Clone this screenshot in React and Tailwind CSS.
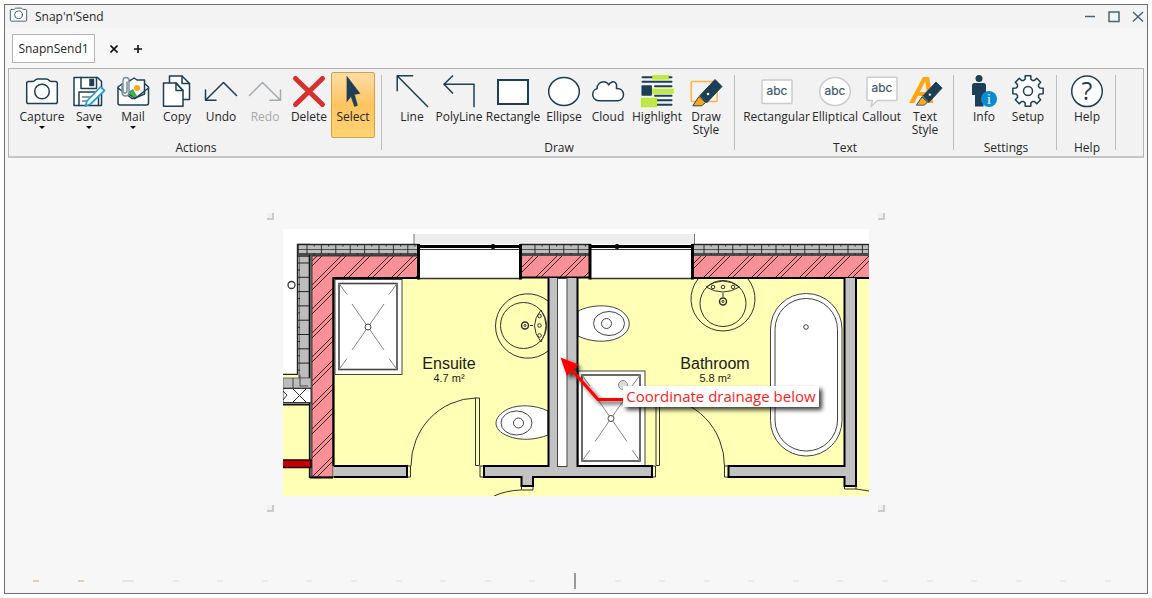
import React, { useState } from "react";

const NAVY = "#1c3f55";

const gearPath = () => {
  const pts = [];
  for (let i = 0; i < 8; i++) {
    const base = (i * Math.PI) / 4;
    [[-0.24, 12.2], [-0.18, 15.4], [0.18, 15.4], [0.24, 12.2], [0.39, 11.4]].forEach(([a, r]) => {
      pts.push(`${(16 + r * Math.sin(base + a)).toFixed(2)} ${(16 - r * Math.cos(base + a)).toFixed(2)}`);
    });
  }
  return `M${pts.join("L")}Z`;
};

const Icon = ({ children, className = "h-8 w-8" }) => (
  <svg
    viewBox="0 0 32 32"
    className={`${className} shrink-0 overflow-visible`}
    fill="none"
    stroke={NAVY}
    strokeWidth="1.5"
    strokeLinejoin="round"
    strokeLinecap="round"
    aria-hidden="true"
  >
    {children}
  </svg>
);

const CameraShape = () => (
  <>
    <path d="M2.500 6.500H6.500Q8 6.500 9 5.300Q10 4 11.500 4H20.500Q22 4 23 5.300Q24 6.500 25.500 6.500H29.500Q31.300 6.500 31.300 8.300V26.700Q31.300 28.500 29.500 28.500H2.500Q.7 28.500 .7 26.700V8.300Q.7 6.500 2.500 6.500Z" fill="#fff" />
    <circle cx="16" cy="16.500" r="7.300" />
  </>
);

const Pen = () => (
  <>
    <path d="M3 30.500L9 21.500L15.500 27.500L12 30.500Z" fill="#ffa614" stroke={NAVY} strokeWidth="1" />
    <path d="M10 20.500L25 4.500L32 11.500L17 27.500Z" fill={NAVY} strokeWidth="1" />
    <circle cx="18" cy="19" r="1.300" fill="#fff" stroke="none" />
  </>
);

const AbcText = ({ y = 20 }) => (
  <text x="16" y={y} textAnchor="middle" fontSize="12" fill="#3d5a6e" stroke="#3d5a6e" strokeWidth="0.2" className="font-[Inter,sans-serif]">
    abc
  </text>
);

const icons = {
  capture: <CameraShape />,
  save: (
    <>
      <path d="M1 2.500H24.500L28.500 6.500V30.500H1Z" fill="#fff" />
      <path d="M8 2.500V13.500H23.500V2.500M6 30.500V17H25.500V30.500" />
      <path d="M17 4.500H20.500V10.500H17Z" fill={NAVY} />
      <path d="M9.500 22H19M9.500 26H15" strokeWidth="1.200" />
      <path d="M27.500 12L31.500 15.500L17.500 29L12.500 31L14 26Z" fill="#fff" stroke="#2a9ddb" strokeWidth="1.800" />
    </>
  ),
  mail: (
    <>
      <path d="M1 12L5 9H28L31.500 12V28Q31.500 30 29.500 30H3Q1 30 1 28Z" fill="#fff" />
      <path d="M14 5L17 3L20 5H27.500V19L18 23L10 18V7Z" fill="#fff" />
      <path d="M11 17L16 14L20 21L17 23Z" fill="#43ad4b" stroke="none" />
      <circle cx="20" cy="13" r="3" fill="#ffa614" stroke="none" />
      <path d="M1 13L15 23.500H18L31.500 13" />
      <path d="M5 10V17Q5 21 8.500 21Q12 21 12 17V6Q12 2.500 9 2.500Q6 2.500 6 6V16Q6 18 8 18Q10 18 10 16V7" fill="#f4f4f4" stroke="#7c8f9c" />
    </>
  ),
  copy: (
    <>
      <path d="M8.500 1H21L28.500 8.500V24.500H8.500Z" fill="#fff" />
      <path d="M21 1V8.500H28.500" />
      <path d="M2.500 8H15L22 15.500V31.300H2.500Z" fill="#fff" />
      <path d="M15 8V15.500H22Z" />
    </>
  ),
  undo: <path d="M.5 15V25.300H11M.5 25.300L18.500 7.500L31.500 20.500" />,
  redo: <path d="M31.500 15V25.300H21M31.500 25.300L13.500 7.500L.5 20.500" stroke="#a3abb1" />,
  delete: <path d="M2.500 3.500L29.500 29.500M29.500 3.500L2.500 29.500" stroke="#d7302f" strokeWidth="5" />,
  select: <path d="M10 1.500L23 18.500L17.500 19.500L20.500 30.500L17.500 31.500L14 21.500L10 26.500Z" fill={NAVY} strokeWidth="0.5" />,
  line: <path d="M1.200 15.500V.8H16.500M1.200 .8L31.500 31.500" strokeLinecap="square" />,
  polyline: <path d="M9.500 1L1 9.200L9.500 18M1 9.200H31V31.500" strokeLinecap="square" />,
  rectangle: <rect x="1" y="5" width="30" height="24" fill="#fff" strokeWidth="2" strokeLinejoin="miter" />,
  ellipse: <ellipse cx="16" cy="16.500" rx="15.300" ry="14" fill="#fff" />,
  cloud: <path d="M7 25.800C3 25.800 .7 22.500 .7 19.500C.7 16 3 14 5 13.700C5 9 8.500 6.700 11.500 6.700C14.500 6.700 16 8.500 16.700 10C18 7 22 5.500 24 8.500C25.500 10.500 24 12 24.500 13.500C28.500 13 31.500 16 31.500 19.500C31.500 23 29 25.800 25.500 25.800Z" fill="#fff" />,
  highlight: (
    <>
      <path d="M1.500 2.200H30.500M1.500 6.800H30.500M14 11.300H30.500M14 16H30.500M14 20.700H30.500M1.500 25.300H30.500M1.500 29.800H30.500" strokeWidth="2" />
      <rect x="1.200" y="11" width="9" height="9" fill={NAVY} />
      <g fill="#c5d79a" stroke="#baf20a" strokeWidth="1.500" strokeLinejoin="miter">
        <rect x="12" y=".8" width="15" height="3" />
        <rect x="12" y="14.500" width="20" height="3.500" />
        <rect x=".8" y="23.500" width="14.500" height="3.500" />
        <rect x=".8" y="28" width="14.500" height="3.500" />
      </g>
    </>
  ),
  drawStyle: (
    <>
      <rect x="1.200" y="6.500" width="26" height="20" rx="1" stroke="#ffb53c" />
      <Pen />
    </>
  ),
  rectangular: (
    <>
      <rect x="1" y="5" width="30" height="23.500" rx="1" fill="#fff" stroke="#ccc" />
      <AbcText />
    </>
  ),
  elliptical: (
    <>
      <ellipse cx="16" cy="16.500" rx="15.300" ry="14" fill="#fff" stroke="#ccc" />
      <AbcText />
    </>
  ),
  callout: (
    <>
      <path d="M2 2.200H30Q31 2.200 31 3.200V24.500Q31 25.500 30 25.500H11.500L5 31.500L6.500 25.500H2Q1 25.500 1 24.500V3.200Q1 2.200 2 2.200Z" fill="#fff" stroke="#ccc" />
      <AbcText y={17} />
    </>
  ),
  textStyle: (
    <>
      <text x="1" y="28" fontSize="36" fontWeight="700" fontStyle="italic" fill="#ffa614" stroke="none" className="font-['Liberation_Sans',sans-serif]">
        A
      </text>
      <g transform="translate(5 3) scale(.88)">
        <Pen />
      </g>
    </>
  ),
  info: (
    <>
      <circle cx="11" cy="3.500" r="3.500" fill={NAVY} stroke="none" />
      <path d="M6.500 8H15.500Q18 8 18 10.500V19H15.500V31.500H7V20H4V10.500Q4 8 6.500 8Z" fill={NAVY} stroke="none" />
      <circle cx="21" cy="24" r="8" fill="#0a8bd6" stroke="none" />
      <text x="21" y="29" textAnchor="middle" fontSize="14" fill="#fff" stroke="none" className="font-['Liberation_Serif',serif]">
        i
      </text>
    </>
  ),
  setup: (
    <>
      <path d={gearPath()} fill="#fff" />
      <circle cx="16" cy="16" r="4.500" />
    </>
  ),
  help: (
    <>
      <circle cx="16" cy="16.300" r="15.300" fill="#fff" />
      <text x="16" y="25" textAnchor="middle" fontSize="25" fill={NAVY} stroke="none" className="font-['Open_Sans',sans-serif]">
        ?
      </text>
    </>
  ),
};

const groups = [
  {
    name: "Actions",
    tools: [
      { id: "capture", label: "Capture", width: "w-[50px]", menu: true },
      { id: "save", label: "Save", menu: true },
      { id: "mail", label: "Mail", menu: true },
      { id: "copy", label: "Copy" },
      { id: "undo", label: "Undo" },
      { id: "redo", label: "Redo", disabled: true },
      { id: "delete", label: "Delete" },
      { id: "select", label: "Select" },
    ],
  },
  {
    name: "Draw",
    tools: [
      { id: "line", label: "Line" },
      { id: "polyline", label: "PolyLine", width: "w-[50px]" },
      { id: "rectangle", label: "Rectangle", width: "w-[58px]" },
      { id: "ellipse", label: "Ellipse" },
      { id: "cloud", label: "Cloud" },
      { id: "highlight", label: "Highlight", width: "w-[54px]" },
      { id: "drawStyle", label: "Draw Style" },
    ],
  },
  {
    name: "Text",
    tools: [
      { id: "rectangular", label: "Rectangular", width: "w-[67px]" },
      { id: "elliptical", label: "Elliptical", width: "w-[50px]" },
      { id: "callout", label: "Callout", width: "w-[43px]" },
      { id: "textStyle", label: "Text Style" },
    ],
  },
  {
    name: "Settings",
    tools: [
      { id: "info", label: "Info" },
      { id: "setup", label: "Setup" },
    ],
  },
  { name: "Help", tools: [{ id: "help", label: "Help" }] },
];

const ToolButton = ({ tool, active, onClick }) => (
  <button
    type="button"
    disabled={tool.disabled}
    aria-pressed={active}
    onClick={onClick}
    className={`flex h-[66px] flex-col items-center gap-[3px] rounded-xs border pt-0.5 ${tool.width || "w-11"} ${
      active ? "border-[#d3a23c] bg-linear-to-b from-[#fddca4] via-[#ffc45f] to-[#ffd372]" : "border-transparent"
    } ${tool.disabled ? "text-[#a8a8a8]" : "text-[#262626]"}`}
  >
    <Icon>{icons[tool.id]}</Icon>
    <span className="w-min text-center text-xs leading-[13px]">{tool.label}</span>
    {tool.menu && <span className="h-0 w-0 border-x-3 border-t-3 border-x-transparent border-t-black" />}
  </button>
);

const Ribbon = () => {
  const [active, setActive] = useState("select");
  return (
    <div className="mx-[3px] flex border border-b-2 border-[#b4b4b4] border-b-[#c6c6c6] bg-[#f2f2f2]">
      {groups.map((g) => (
        <React.Fragment key={g.name}>
          <section aria-label={g.name} className="flex flex-col items-center pt-[3px] pr-1.5 pl-2">
            <div className="flex">
              {g.tools.map((t) => (
                <ToolButton key={t.id} tool={t} active={active === t.id} onClick={() => setActive(t.id)} />
              ))}
            </div>
            <span className="pt-0.5 text-xs text-[#262626]">{g.name}</span>
          </section>
          <div className="my-1.5 w-px bg-[#bdbdbd]" />
        </React.Fragment>
      ))}
    </div>
  );
};

const Brick = ({ x1, x2, offset = 0 }) => {
  const joints = [];
  for (let x = x1 + offset; x < x2; x += 14.4) joints.push(x);
  return (
    <g stroke="#222" strokeWidth="0.9">
      <rect x={x1} y="244.500" width={x2 - x1} height="11.500" fill="#bdbdbd" strokeWidth="1.400" />
      <rect x={x1} y="253" width={x2 - x1} height="3" fill="#4a4a4a" stroke="none" />
      <path d={`M${x1} 249.500H${x2}`} strokeWidth="0.7" />
      {joints.map((x) => (
        <path key={x} d={`M${x} 244V254M${x + 7.2} 244V246.500M${x + 7.2} 253V255`} />
      ))}
    </g>
  );
};

const WindowOpening = ({ x1, x2, knob }) => (
  <g>
    <rect x={x1} y="245" width={x2 - x1} height="33" fill="#fff" />
    <path d={`M${x1} 246.500H${x2}`} stroke="#000" strokeWidth="3" />
    <path d={`M${x1} 249.500H${x2}`} stroke="#333" />
    <path d={`M${x1} 278.500H${x2}`} stroke="#333" strokeWidth="1.500" />
    <path d={`M${x1} 244V279.500M${x2} 244V279.500`} stroke="#000" strokeWidth="3" />
    <circle cx={knob} cy="246.500" r="2.500" fill="#000" />
  </g>
);

const Shower = ({ x, y, h }) => {
  const cx = x + 33;
  const cy = y + h / 2;
  return (
    <g fill="#fff" stroke="#444" strokeWidth="1">
      <rect x={x} y={y} width="67" height={h} />
      <rect x={x + 4} y={y + 4} width="58" height={h - 9} strokeWidth="1.600" />
      <g stroke="#888">
        <path d={`M${x + 4} ${y + 4}l8 11M${x + 62} ${y + 4}l-8 11M${x + 4} ${y + h - 5}l8 -11M${x + 62} ${y + h - 5}l-8 -11`} />
        <path d={`M${cx - 16} ${cy - 23}L${cx + 16} ${cy + 23}M${cx + 16} ${cy - 23}L${cx - 16} ${cy + 23}`} />
      </g>
      <circle cx={cx} cy={cy} r="3" />
    </g>
  );
};

const Room = ({ x, name, area }) => (
  <g fill="#1a1a1a" textAnchor="middle" className="font-['Liberation_Sans',sans-serif]">
    <text x={x} y="369" fontSize="16">{name}</text>
    <text x={x} y="382" fontSize="11">{area}</text>
  </g>
);

const FloorPlan = () => (
  <svg viewBox="283 229 586 267" className="block w-[586px]" role="img" aria-label="Floor plan">
    <defs>
      <pattern id="hatch" width="24" height="24" patternUnits="userSpaceOnUse">
        <rect width="24" height="24" fill="#f79097" />
        <path d="M21 0L0 21M45 0L21 24M2 0L0 2M26 0L2 24" stroke="#3a2426" strokeWidth="1" />
      </pattern>
      <filter id="soft" x="-20%" y="-30%" width="150%" height="190%">
        <feDropShadow dx="3" dy="3" stdDeviation="2" floodColor="#000" floodOpacity="0.750" />
      </filter>
    </defs>

    {/* floors */}
    <rect x="283" y="229" width="586" height="267" fill="#fff" />
    <path d="M333 278H869V496H283V404H333Z" fill="#ffffb5" />
    <rect x="414" y="234" width="280" height="10" fill="#eee" />
    <path d="M414 234V245M694.500 234V245" stroke="#777" />

    {/* outer walls */}
    <rect x="297.500" y="244.500" width="12" height="134" fill="#bdbdbd" stroke="#222" strokeWidth="1.400" />
    <path d="M299.500 256V378" stroke="#555" strokeWidth="0.7" />
    {[0, 1, 2, 3, 4, 5, 6, 7].map((i) => (
      <path key={i} d={`M298 ${263 + i * 14.3}H309M298 ${270 + i * 14.3}H300`} stroke="#222" />
    ))}
    <Brick x1={298} x2={418} offset={9} />
    <Brick x1={521} x2={590} offset={14} />
    <Brick x1={693} x2={869} offset={11} />
    <rect x="309" y="256" width="3" height="222" fill="#777" />
    <path d="M309.500 255V478" stroke="#111" strokeWidth="1.300" />
    <path d="M312 256H418V278H333V477H312Z" fill="url(#hatch)" stroke="#222" strokeWidth="0.8" />
    <rect x="521" y="256" width="69" height="22" fill="url(#hatch)" />
    <rect x="693" y="256" width="176" height="22" fill="url(#hatch)" />
    <path d="M418 278H333.500V466M521 277.500H590M693 278H869M310 477.500H333" fill="none" stroke="#000" strokeWidth="2.200" />
    <WindowOpening x1={418.5} x2={520.5} knob={493} />
    <WindowOpening x1={590} x2={692.5} knob={617} />

    {/* left side details */}
    <circle cx="291.500" cy="285" r="3.500" fill="#fff" stroke="#333" strokeWidth="1.300" />
    <path d="M283 374.500H298" stroke="#222" strokeWidth="1.500" />
    <rect x="283" y="375" width="15" height="3" fill="#ffffb5" />
    <rect x="283" y="378" width="28" height="10" fill="#bdbdbd" stroke="#555" strokeWidth="0.8" />
    <path d="M293 378V388M300 375V386H308" stroke="#444" fill="none" />
    <rect x="283" y="388.500" width="28" height="14" fill="#fff" stroke="#333" />
    <path d="M293 389L306 402M306 389L293 402M283 391L287 395L283 400" stroke="#333" fill="none" />
    <path d="M283 404.500H310" stroke="#111" strokeWidth="2" />
    <rect x="282" y="460" width="29" height="7.500" fill="#c80000" stroke="#1a0000" strokeWidth="1.500" />

    {/* sanitary ware */}
    <Shower x={335} y={279.5} h={95} />
    <Shower x={578} y={371} h={95} />
    <circle cx="623" cy="385" r="4.500" fill="#ddd" stroke="#888" />
    <g fill="none" stroke="#333" strokeWidth="1">
      <path d="M548 301A32.200 32.200 0 1 0 548 351" />
      <circle cx="523.500" cy="325.500" r="23" />
      <path d="M541 310Q528 325.500 541 342Q551 325.500 541 310" />
      <circle cx="539.500" cy="316" r="1.800" />
      <circle cx="539.500" cy="325.500" r="1.800" />
      <circle cx="539.500" cy="335.500" r="1.800" />
      <circle cx="525" cy="325.500" r="3.500" strokeWidth="1.500" />
      <circle cx="525" cy="325.500" r="1" />
      <path d="M530 325.500H533" />
      <path d="M698 279A32 32 0 1 0 748 279" />
      <circle cx="723" cy="303.500" r="23" />
      <path d="M706 287Q723 297 739.500 287Q723 275 706 287" />
      <circle cx="713" cy="287" r="1.800" />
      <circle cx="723" cy="287" r="1.800" />
      <circle cx="733" cy="287" r="1.800" />
      <circle cx="723" cy="301.500" r="3.500" strokeWidth="1.500" />
      <circle cx="723" cy="301.500" r="1" />
      <path d="M723 293V297" />
    </g>
    <g fill="#fff" stroke="#444" strokeWidth="1">
      <path d="M578 311C590 305 607 304 618 309C633 317 633 331 618 338C607 343 590 342 578 336Z" />
      <path d="M548 411C536 405 519 404 508 409C492 417 492 430 508 436C519 441 536 440 548 435Z" />
      <ellipse cx="609" cy="323.500" rx="15.500" ry="12" />
      <ellipse cx="516.500" cy="423" rx="15.500" ry="12" />
      <circle cx="606.500" cy="323.500" r="5" />
      <circle cx="518.500" cy="423" r="5" />
      <rect x="770.500" y="293.500" width="71.500" height="162.500" rx="35.500" />
      <rect x="775" y="298.500" width="62.500" height="152.500" rx="31" />
      <circle cx="806" cy="327" r="2.300" />
    </g>

    {/* doors */}
    <g fill="none" stroke="#333" strokeWidth="1">
      <path d="M411 466A66 68 0 0 1 476 398M659 398A66 68 0 0 1 724.500 466" />
      <path d="M475.500 398H479.500V465.500H475.500ZM656 398H659.500V465.500H656Z" />
      <path d="M407 466H410.500V477H407M484 466H480V477H484M652 466H655.500V477H652M728 466H724.500V477H728" />
      <path d="M521.500 487V490H533V487M494 496Q506 490.500 521 490M844.500 486V489H856V486M856 489L869 491" />
    </g>

    {/* inner walls */}
    <g fill="#c2c2c2" stroke="#000" strokeWidth="2">
      <path d="M333.500 466H407V477H333.500" />
      <path d="M548.500 278V466H484V477H521.500V486H533V477H652V466H577.500V278" />
      <path d="M844.500 278V466H728.500V477H844.500V486H856V278" />
    </g>
    <rect x="557.500" y="278.500" width="9.500" height="188" fill="#fff" stroke="#444" />

    <Room x={449} name="Ensuite" area="4.7 m²" />
    <Room x={715} name="Bathroom" area="5.8 m²" />

    {/* annotation */}
    <g filter="url(#soft)">
      <path d="M570 368L598 399.500H626" fill="none" stroke="#f00" strokeWidth="3" />
      <path d="M560.500 357.500L578.500 364.500L567 376Z" fill="#f00" />
      <rect x="623" y="386" width="196" height="21" fill="#fff" />
    </g>
    <text x="721" y="402" textAnchor="middle" fontSize="15" fill="#f22" className="font-['Open_Sans',sans-serif]">
      Coordinate drainage below
    </text>
  </svg>
);

const grips = ["top-0 left-0", "top-0 right-0", "bottom-0 left-0", "bottom-0 right-0"];

const marks = Array.from({ length: 25 }, (_, i) => i);

const StatusStrip = () => (
  <div className="flex items-center justify-between pr-9 pb-1 pl-7" aria-hidden="true">
    {marks.map((i) =>
      i === 12 ? (
        <span key={i} className="h-4 w-0.5 bg-[#999]" />
      ) : (
        <span key={i} className={`h-0.5 ${i < 2 ? "w-1.5 bg-[#e3cfb5]" : i === 2 ? "w-3 bg-[#e6e6e6]" : "w-1.5 bg-[#ebebeb]"}`} />
      )
    )}
  </div>
);

const App = () => (
  <div className="flex min-h-screen bg-white p-1 font-['Open_Sans','Noto_Sans',sans-serif] text-[#262626]">
    <div className="flex flex-1 flex-col border border-[#707070] bg-[#f7f7f7]">
      <header className="flex h-[23px] items-center bg-[#f3f3f3] pr-[3px] pl-[5px]">
        <Icon className="mb-1 h-[17px] w-[17px]">
          <CameraShape />
        </Icon>
        <h1 className="pl-2 text-xs">Snap'n'Send</h1>
        <div className="ml-auto flex gap-3 text-[#4b6576]">
          <button type="button" aria-label="Minimize">
            <svg viewBox="0 0 12 12" className="h-3 w-3" stroke="currentColor" strokeWidth="1.500"><path d="M1 5.500H11" /></svg>
          </button>
          <button type="button" aria-label="Maximize">
            <svg viewBox="0 0 12 12" className="h-3 w-3" fill="none" stroke="currentColor" strokeWidth="1.500"><path d="M1 1H11V10.500H1Z" /></svg>
          </button>
          <button type="button" aria-label="Close">
            <svg viewBox="0 0 12 12" className="h-3 w-3" stroke="currentColor" strokeWidth="1.500"><path d="M1 1L11 10.500M11 1L1 10.500" /></svg>
          </button>
        </div>
      </header>

      <div className="flex items-center px-[7px] pt-1.5 pb-[5px]">
        <button type="button" className="h-[29px] w-[83px] border border-[#b4b4b4] bg-white text-xs">SnapnSend1</button>
        <button type="button" aria-label="Close tab" className="ml-[13px] flex w-3 justify-center">
          <svg viewBox="0 0 8 8" className="h-2 w-2" stroke="#111" strokeWidth="1.600"><path d="M.5 .5L7.500 7.500M7.500 .5L.5 7.500" /></svg>
        </button>
        <button type="button" aria-label="New tab" className="ml-3 flex w-3 justify-center">
          <svg viewBox="0 0 8 8" className="h-2 w-2" stroke="#111" strokeWidth="1.600"><path d="M4 0V8M0 4H8" /></svg>
        </button>
      </div>

      <Ribbon />

      <main className="flex flex-1 justify-center pt-[55px]">
        <div className="relative self-start p-4">
          <FloorPlan />
          {grips.map((pos) => (
            <span key={pos} className={`absolute h-[7px] w-[7px] border-r-2 border-b-2 border-[#cbcbcb] bg-[#f0f0f0] ${pos}`} />
          ))}
        </div>
      </main>

      <StatusStrip />
    </div>
  </div>
);

export default App;
